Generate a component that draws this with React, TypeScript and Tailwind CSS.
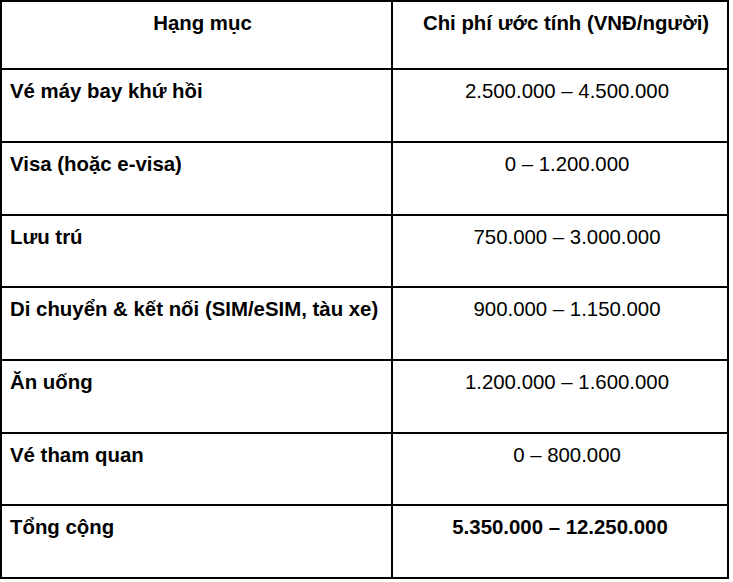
import React from "react";

interface CostRow {
  item: string;
  cost: string;
  height: string;
  total?: boolean;
}

const rows: CostRow[] = [
  { item: "Vé máy bay khứ hồi", cost: "2.500.000 – 4.500.000", height: "h-[73px]" },
  { item: "Visa (hoặc e-visa)", cost: "0 – 1.200.000", height: "h-[73px]" },
  { item: "Lưu trú", cost: "750.000 – 3.000.000", height: "h-[72px]" },
  { item: "Di chuyển & kết nối (SIM/eSIM, tàu xe)", cost: "900.000 – 1.150.000", height: "h-[73px]" },
  { item: "Ăn uống", cost: "1.200.000 – 1.600.000", height: "h-[73px]" },
  { item: "Vé tham quan", cost: "0 – 800.000", height: "h-[72px]" },
  { item: "Tổng cộng", cost: "5.350.000 – 12.250.000", height: "h-[73px]", total: true },
];

const cellBase = "border-r-2 border-b-2 border-black pt-[10px] leading-[23px]";

const App = () => {
  return (
    <div className="min-h-[582px] w-[733px] bg-white font-['Liberation_Sans',Arial,sans-serif] text-[20.4px] text-black">
      {/* header + rows share the same two-column grid */}
      <div className="grid w-[729px] grid-cols-[391px_336px] border-l-2 border-t-2 border-black">
        <div className={`${cellBase} h-[68px] pl-[14px] pr-[2px] text-center font-bold`}>Hạng mục</div>
        <div className={`${cellBase} h-[68px] pl-[14px] pr-[2px] text-center font-bold`}>
          Chi phí ước tính (VNĐ/người)
        </div>

        {rows.map(row => (
          <React.Fragment key={row.item}>
            <div className={`${cellBase} ${row.height} pl-[8px] font-bold whitespace-nowrap`}>{row.item}</div>
            <div
              className={`${cellBase} ${row.height} text-center ${
                row.total ? "px-[8px] font-bold" : "pl-[16px] pr-[2px]"
              }`}
            >
              {row.cost}
            </div>
          </React.Fragment>
        ))}
      </div>
    </div>
  );
};

export default App;
